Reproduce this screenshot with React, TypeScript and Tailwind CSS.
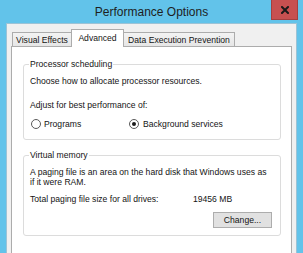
import React from "react";

const font = { fontFamily: '"Liberation Sans", Arial, sans-serif' };

function Radio({ checked }: { checked?: boolean }) {
  return (
    <span className="flex h-[10px] w-[10px] shrink-0 items-center justify-center rounded-full border border-[#5a5a5a] bg-white">
      {checked && <span className="h-[4px] w-[4px] rounded-full bg-[#1a1a1a]" />}
    </span>
  );
}

function GroupBox({ title, className, children }: { title: string; className?: string; children: React.ReactNode }) {
  return (
    <fieldset className={`rounded-[3px] border border-[#dcdcdc] px-[6px] ${className ?? ""}`}>
      <legend className="-ml-[1px] px-[1px] leading-[10px]">{title}</legend>
      {children}
    </fieldset>
  );
}

export default function App() {
  return (
    <div className="relative h-[253px] w-[303px] overflow-hidden bg-[#62c3ea] text-[8.6px] text-[#141414]" style={font}>
      {/* Title bar */}
      <div className="flex h-[23px] items-center justify-center pt-[1px] text-[12px] text-[#1e1e1e]">
        Performance Options
      </div>
      <div className="absolute right-[5px] top-0 flex h-[20px] w-[27px] items-center justify-center border border-t-0 border-[#a34040] bg-[#c75050]">
        <svg width="8" height="8" viewBox="0 0 8 8">
          <path d="M1 1 L7 7 M7 1 L1 7" stroke="#1a1a1a" strokeWidth="2" strokeLinecap="square" />
        </svg>
      </div>

      {/* Window client */}
      <div className="ml-[6px] h-[240px] w-[291px] border border-b-0 border-[#9cc3d6] bg-[#f0f0f0] px-[4px] pt-[5px]">
        {/* Tabs */}
        <div className="relative z-10 -mb-[1px] flex h-[18px] items-end pl-[1px] leading-[10px]">
          <div className="flex h-[15px] w-[60px] items-center justify-center border border-[#acacac] bg-gradient-to-b from-[#f3f3f3] to-[#e6e6e6]">
            Visual Effects
          </div>
          <div className="-ml-[1px] flex h-[18px] w-[53px] items-center justify-center border border-b-0 border-[#acacac] bg-white pb-[1px]">
            Advanced
          </div>
          <div className="-ml-[1px] flex h-[15px] w-[112px] items-center justify-center border border-[#acacac] bg-gradient-to-b from-[#f3f3f3] to-[#e6e6e6]">
            Data Execution Prevention
          </div>
        </div>

        {/* Panel */}
        <div className="h-[220px] border border-[#acacac] bg-white pl-[11px] pr-[10px] pt-[12px] leading-[10px]">
          <GroupBox title="Processor scheduling" className="pb-[10px]">
            <div className="pt-[7px]">Choose how to allocate processor resources.</div>
            <div className="pt-[14px]">Adjust for best performance of:</div>
            <div className="flex items-center pl-[1px] pt-[9px]">
              <label className="flex w-[98px] items-center gap-[3px]">
                <Radio />
                Programs
              </label>
              <label className="flex items-center gap-[4px]">
                <Radio checked />
                Background services
              </label>
            </div>
          </GroupBox>

          <GroupBox title="Virtual memory" className="mt-[10px] pb-[7px] pr-[8px]">
            <div className="pt-[7px]">
              A paging file is an area on the hard disk that Windows uses as
              <br />
              if it were RAM.
            </div>
            <div className="flex pt-[7px]">
              <span className="w-[163px]">Total paging file size for all drives:</span>
              <span>19456 MB</span>
            </div>
            <div className="flex justify-end pt-[8px]">
              <button className="flex h-[16px] w-[59px] items-center justify-center border border-[#adadad] bg-[#e1e1e1]">
                Change...
              </button>
            </div>
          </GroupBox>
        </div>
      </div>
    </div>
  );
}
